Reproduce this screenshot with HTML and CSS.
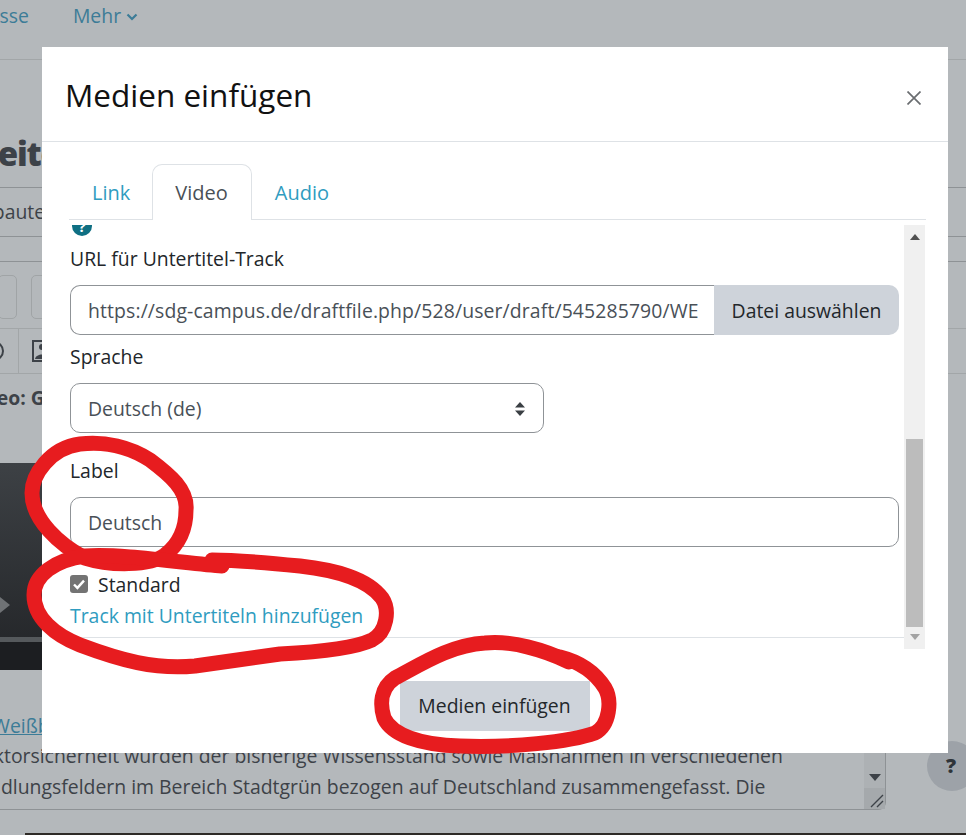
FILE: index.html
```html
<!DOCTYPE html>
<html lang="de">
<head>
<meta charset="utf-8">
<title>Medien einfügen</title>
<link rel="stylesheet" href="styles.css">
</head>
<body>
<div class="page">
  <nav class="nav">
    <a class="nav-link nav-first">Klasse</a>
    <a class="nav-link">Mehr <svg class="chev" viewBox="0 0 12 8" width="12" height="8"><path d="M1.5 1.5 6 6l4.5-4.5" fill="none" stroke="currentColor" stroke-width="2.2"/></svg></a>
  </nav>
  <h1 class="page-title">Seite</h1>
  <div class="sub-row">erbaute</div>
  <div class="gap-row"></div>
  <div class="tool-row">
    <span class="tool-btn tool-a"></span>
    <span class="tool-btn tool-b"></span>
  </div>
  <div class="icon-row">
    <span class="round-icon"></span>
    <span class="icon-sep"></span>
    <svg class="img-icon" viewBox="0 0 20 24" width="20" height="24"><rect x="1" y="2" width="18" height="20" fill="none" stroke="#3d4248" stroke-width="2"/><circle cx="10" cy="8" r="3" fill="#3d4248"/><path d="M3 20c1-6 13-6 14 0z" fill="#3d4248"/></svg>
  </div>
  <div class="video-title">Video: Grün</div>
  <div class="video">
    <svg class="play" viewBox="0 0 10 16" width="10" height="16"><path d="M0 0l10 8-10 8z" fill="#6f7275"/></svg>
    <div class="progress"></div>
  </div>
  <div class="credit"><a class="credit-link">Weißbuch Stadtgrün</a></div>
  <div class="textarea">
    <div class="textarea-text">
      <p class="ta-line ta-first">Faktorsicherheit wurden der bisherige Wissensstand sowie Maßnahmen in verschiedenen</p>
      <p class="ta-line">Handlungsfeldern im Bereich Stadtgrün bezogen auf Deutschland zusammengefasst. Die</p>
    </div>
    <div class="ta-scroll">
      <svg class="ta-arrow" viewBox="0 0 12 7" width="12" height="7"><path d="M0 0h12L6 7z" fill="#3d4248"/></svg>
      <div class="ta-corner"><svg viewBox="0 0 14 14" width="14" height="14"><path d="M1 13 13 1M7 13l6-6" stroke="#3d4248" stroke-width="1.4" fill="none"/></svg></div>
    </div>
  </div>
  <div class="page-foot"></div>
</div>

<div class="help">?</div>

<section class="modal">
  <header class="modal-head">
    <h2 class="modal-title">Medien einfügen</h2>
    <svg class="close" viewBox="0 0 14 14" width="14" height="14"><path d="M0.5 0.5l13 13M13.5 0.5l-13 13" stroke="#6a6d70" stroke-width="1.7" fill="none"/></svg>
  </header>
  <div class="modal-body">
    <div class="tabs">
      <a class="tab tab-first">Link</a>
      <a class="tab tab-active">Video</a>
      <a class="tab">Audio</a>
    </div>
    <div class="pane">
      <div class="pane-content">
        <span class="info"><svg viewBox="0 0 20 20" width="20" height="20"><circle cx="10" cy="10" r="10" fill="#0f6f83"/><text x="10" y="15.5" text-anchor="middle" class="info-q">?</text></svg></span>
        <label class="field-label label-url">URL für Untertitel-Track</label>
        <div class="input-group">
          <div class="input input-left">https://sdg-campus.de/draftfile.php/528/user/draft/545285790/WE</div>
          <div class="input-btn">Datei auswählen</div>
        </div>
        <label class="field-label label-lang">Sprache</label>
        <div class="input select">Deutsch (de)
          <svg class="select-arrows" viewBox="0 0 12 14" width="12" height="14"><path d="M6 0l5 5.5H1zM6 14l5-5.5H1z" fill="#3a3f44"/></svg>
        </div>
        <label class="field-label label-label">Label</label>
        <div class="input full">Deutsch</div>
        <div class="check-row">
          <span class="check"><svg viewBox="0 0 18 18" width="18" height="18"><path d="M4 9.5l3.4 3.4L14 5.6" fill="none" stroke="#fff" stroke-width="2.4"/></svg></span>
          <span class="check-text">Standard</span>
        </div>
        <a class="add-link">Track mit Untertiteln hinzufügen</a>
      </div>
      <div class="scrollbar">
        <svg class="sb-arrow" viewBox="0 0 10 6" width="10" height="6"><path d="M5 0l5 6H0z" fill="#505050"/></svg>
        <div class="sb-thumb"></div>
        <svg class="sb-arrow" viewBox="0 0 10 6" width="10" height="6"><path d="M0 0h10L5 6z" fill="#a3a3a3"/></svg>
      </div>
    </div>
    <div class="modal-foot"><button class="submit">Medien einfügen</button></div>
  </div>
</section>

<svg class="scribble" viewBox="0 0 966 835" width="966" height="835">
  <g fill="none" stroke="#e71c1f" stroke-width="15" stroke-linecap="round" stroke-linejoin="round">
    <path d="M186 510C188 490 170 475 150 460C130 447 105 441 80 444C50 448 32 475 32 493C32 520 60 545 85 558C110 566 150 566 165 555C178 545 186 530 186 510Z"/>
    <path d="M222 566C190 564 120 553 85 556C55 560 34 575 34 595C34 618 55 635 80 645C120 660 155 670 195 666C225 662 250 658 280 654C320 652 355 648 372 640C387 632 390 610 382 598C367 578 335 570 300 566C270 563 240 560 212 560"/>
    <path d="M569 662C545 650 510 640 485 643C450 645 420 665 395 678C380 688 380 705 384 718C392 735 420 745 460 746C510 748 570 742 595 733C610 725 612 700 605 688C595 672 580 662 560 657"/>
  </g>
</svg>
</body>
</html>
```

FILE: styles.css
```css
* { box-sizing: border-box; }
html, body { margin: 0; height: 100%; }
body {
  position: relative;
  width: 966px;
  height: 835px;
  overflow: hidden;
  background: #b4b8bb;
  color: #3d4248;
  font-family: "Open Sans", "Noto Sans", sans-serif;
  font-size: 19.4px;
}
.page { display: flex; flex-direction: column; width: 966px; height: 835px; }

.nav { height: 60px; flex: none; display: flex; align-items: flex-start; gap: 44px; padding-top: 2px; margin-left: -28px; border-bottom: 1px solid #a2a6a8; }
.nav-link { color: #3c7c97; }
.chev { vertical-align: 2px; }
.nav-first { text-decoration: none; }

.page-title { flex: none; height: 128px; margin: 0 0 0 -20px; padding-top: 72px; font-size: 33px; line-height: 44px; font-weight: 800; letter-spacing: -1.2px; border-bottom: 1px solid #8e9295; }
.sub-row { flex: none; height: 49px; margin-left: -26px; padding-top: 10px; border-bottom: 1px solid #8e9295; }
.gap-row { flex: none; height: 25px; border-bottom: 1px solid #8e9295; }
.tool-row { flex: none; height: 67px; display: flex; gap: 14px; padding-top: 13px; border-bottom: 1px solid #a2a6a8; }
.tool-btn { display: block; height: 44px; border: 1px solid #a0a4a6; border-radius: 5px; }
.tool-a { width: 19px; margin-left: -2px; }
.tool-b { width: 40px; }
.icon-row { flex: none; height: 45px; display: flex; align-items: center; border-bottom: 1px solid #a2a6a8; }
.round-icon { display: block; width: 20px; height: 20px; margin-left: -16px; border: 2px solid #3d4248; border-radius: 50%; flex: none; }
.icon-sep { display: block; width: 1px; height: 44px; margin-left: 14px; background: #a2a6a8; flex: none; }
.img-icon { margin-left: 13px; flex: none; }
.video-title { flex: none; height: 89px; margin-left: -34px; padding-top: 10px; font-weight: 700; }
.video { flex: none; position: relative; width: 600px; height: 207px; background: linear-gradient(#3d4145, #222427); }
.play { position: absolute; left: 0; top: 134px; }
.progress { position: absolute; left: 0; right: 0; top: 174px; height: 5px; background: #55595c; }
.video::after { content: ""; position: absolute; left: 0; right: 0; top: 179px; bottom: 0; background: #1c1e21; }
.credit { flex: none; height: 72px; margin-left: -8px; padding-top: 43px; line-height: 26px; white-space: nowrap; }
.credit-link { color: #3c7c97; text-decoration: underline; }
.textarea { flex: none; display: flex; justify-content: space-between; width: 886px; height: 68px; border: 1px solid #8e9295; border-width: 0 1px 1px 0; border-bottom-right-radius: 8px; }
.textarea-text { margin: -2px 0 0 -36px; }
.ta-line { margin: 0; line-height: 31px; white-space: nowrap; }
.ta-first { margin-left: 9px; }
.ta-scroll { width: 21px; display: flex; flex-direction: column; align-items: center; justify-content: flex-end; background: #adb1b4; }
.ta-arrow { margin-bottom: 7px; }
.ta-corner { width: 21px; height: 21px; background: #a5a9ac; display: flex; align-items: flex-end; justify-content: flex-end; padding: 0 1px 1px 0; }
.page-foot { flex: none; height: 26px; }
.page-foot::after { content: ""; display: block; height: 3px; margin: 23px 0 0 25px; background: #2e2a26; }

.help { position: absolute; left: 927px; top: 741px; width: 50px; height: 50px; padding-left: 19px; border-radius: 50%; background: #9da2a8; color: #2f3439; font-weight: 800; font-size: 20px; line-height: 50px; }

.modal { position: absolute; left: 42px; top: 47px; width: 906px; height: 706px; background: #fff; color: #1d2125; display: flex; flex-direction: column; }
.modal-head { flex: none; height: 95px; display: flex; align-items: center; justify-content: space-between; padding: 2px 27px 0 23px; border-bottom: 1px solid #dee2e6; }
.modal-title { margin: 0; font-size: 31.5px; line-height: 40px; font-weight: 400; color: #111; }
.close { flex: none; margin-top: 6px; }
.modal-body { flex: 1; display: flex; flex-direction: column; padding: 22px 22px 0 27px; }
.tabs { flex: none; display: flex; height: 56px; border-bottom: 1px solid #dee2e6; }
.tab { display: block; height: 56px; padding: 13px 22px 0; color: #2f9cc0; font-size: 20px; line-height: 30px; border: 1px solid transparent; border-bottom: 0; }
.tab-first { padding-right: 21px; }
.tab-active { padding-right: 23px; color: #4a5056; border-color: #dee2e6; border-radius: 10px 10px 0 0; background: #fff; position: relative; z-index: 1; }
.pane { flex: none; display: flex; height: 424px; margin-top: 5px; }
.pane-content { flex: none; width: 835px; height: 413px; overflow: hidden; display: flex; flex-direction: column; align-items: flex-start; padding-left: 1px; border-bottom: 1px solid #dee2e6; }
.info { display: block; height: 11px; margin-left: 2px; overflow: hidden; flex: none; position: relative; }
.info svg { display: block; margin-top: -9px; }
.info-q { font-size: 15px; font-weight: 700; fill: #fff; font-family: "Open Sans", sans-serif; }
.field-label { display: block; flex: none; color: #22262a; line-height: 26px; }
.label-url { margin-top: 10px; }
.label-lang { margin-top: 9px; }
.label-label { margin-top: 25px; }
.input-group { display: flex; flex: none; width: 829px; height: 50px; margin-top: 13px; }
.input { display: flex; align-items: center; flex: none; height: 50px; padding-left: 17px; border: 1px solid #8f9397; border-radius: 10px; color: #495057; background: #fff; white-space: nowrap; }
.input-left { width: 644px; border-right: 0; border-radius: 10px 0 0 10px; overflow: hidden; letter-spacing: 0.12px; }
.input-btn { flex: 1; display: flex; align-items: center; justify-content: center; background: #ced3da; color: #23272b; border-radius: 0 10px 10px 0; }
.select { position: relative; width: 474px; margin-top: 13px; }
.select-arrows { position: absolute; right: 17px; top: 18px; }
.full { width: 829px; margin-top: 13px; }
.check-row { flex: none; display: flex; align-items: center; gap: 10px; margin-top: 24px; height: 26px; color: #22262a; }
.check { display: block; flex: none; width: 18px; height: 18px; border-radius: 3px; background: #737373; }
.check svg { display: block; }
.add-link { display: block; flex: none; margin-top: 6px; color: #2f9cc0; line-height: 26px; }
.scrollbar { flex: none; width: 21px; height: 424px; background: #f0f0f0; display: flex; flex-direction: column; align-items: center; padding: 9px 0 8px; }
.sb-thumb { width: 17px; height: 188px; margin: 199px 0 7px; background: #bcbcbc; flex: none; }
.sb-arrow { flex: none; }
.modal-foot { flex: none; display: flex; justify-content: center; padding: 32px 0 0; margin: 0 -2px 0 -8px; }
.submit { width: 190px; height: 50px; border: 0; background: #ced3da; color: #23272b; font: inherit; line-height: 48px; padding: 0; }

.scribble { position: absolute; left: 0; top: 0; pointer-events: none; }
```
